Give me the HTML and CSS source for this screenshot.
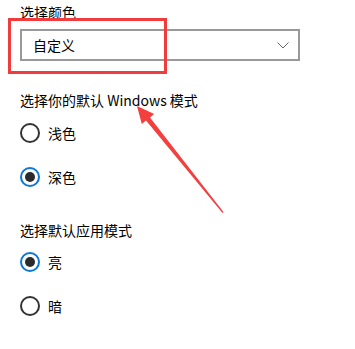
FILE: index.html
```html
<!DOCTYPE html>
<html>
<head>
<meta charset="utf-8">
<link rel="stylesheet" href="styles.css">
</head>
<body>
<div class="page">
  <div class="label first">选择颜色</div>
  <div class="select">
    <span class="select-value">自定义</span>
    <svg class="chevron" width="12" height="7" viewBox="0 0 12 7"><path d="M0.5 0.5 L6 6 L11.5 0.5" fill="none" stroke="#666" stroke-width="1"/></svg>
  </div>
  <div class="label second">选择你的默认 Windows 模式</div>
  <div class="radios">
    <div class="radio"><span class="circle"></span><span>浅色</span></div>
    <div class="radio"><span class="circle on"></span><span>深色</span></div>
  </div>
  <div class="label third">选择默认应用模式</div>
  <div class="radios app">
    <div class="radio"><span class="circle on"></span><span>亮</span></div>
    <div class="radio"><span class="circle"></span><span>暗</span></div>
  </div>
  <div class="highlight"></div>
  <svg class="arrow" width="355" height="349" viewBox="0 0 355 349">
    <polygon points="137,106 154.2,114 150,117.5 223.5,212 222.5,213 146,120.5 141.8,124" fill="#f43f3f"/>
  </svg>
</div>
</body>
</html>
```
FILE: styles.css
```css
html, body {
  margin: 0;
  padding: 0;
  background: #fff;
}
.page {
  position: relative;
  width: 355px;
  height: 349px;
  padding-left: 20px;
  box-sizing: border-box;
  font-family: "Noto Sans CJK SC", "Noto Sans", sans-serif;
  font-size: 14px;
  color: #000;
  overflow: hidden;
}
.label {
  line-height: 20px;
  height: 20px;
}
.label.first { padding-top: 2px; }
.label.second { margin-top: 29px; }
.label.third { margin-top: 33px; }
.select {
  margin-top: 7px;
  width: 280px;
  height: 32px;
  border: 2px solid #999;
  box-sizing: border-box;
  display: flex;
  align-items: center;
  justify-content: space-between;
  padding: 0 9px 0 11px;
}
.select-value { line-height: 20px; }
.chevron { display: block; margin-top: 1px; }
.radios {
  display: flex;
  flex-direction: column;
  gap: 24px;
  margin-top: 13px;
}
.radios.app { margin-top: 12px; }
.radio {
  display: flex;
  align-items: center;
  gap: 8px;
  height: 20px;
  line-height: 20px;
}
.circle {
  width: 20px;
  height: 20px;
  box-sizing: border-box;
  border: 2px solid #333;
  border-radius: 50%;
  display: flex;
  align-items: center;
  justify-content: center;
}
.circle.on {
  border-color: #0a78d4;
}
.circle.on::after {
  content: "";
  width: 10px;
  height: 10px;
  border-radius: 50%;
  background: #2b2b2b;
}
.highlight {
  position: absolute;
  left: 8px;
  top: 18px;
  width: 159px;
  height: 56px;
  box-sizing: border-box;
  border: 3px solid #f03c3c;
}
.arrow {
  position: absolute;
  left: 0;
  top: 0;
}
```
